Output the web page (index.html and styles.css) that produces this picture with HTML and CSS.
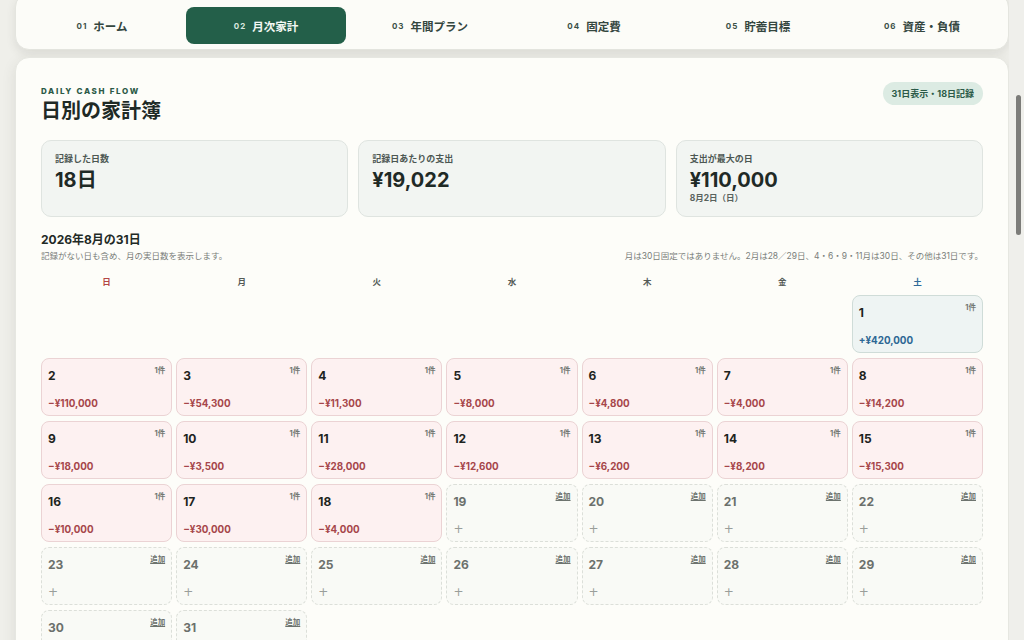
FILE: index.html
```html
<!DOCTYPE html>
<html lang="ja">
<head>
<meta charset="utf-8">
<title>日別の家計簿</title>
<link rel="stylesheet" href="styles.css">
</head>
<body>
<div class="page">
  <nav class="nav">
    <a class="tab"><span class="num">01</span>ホーム</a>
    <a class="tab active"><span class="num">02</span>月次家計</a>
    <a class="tab"><span class="num">03</span>年間プラン</a>
    <a class="tab"><span class="num">04</span>固定費</a>
    <a class="tab"><span class="num">05</span>貯蓄目標</a>
    <a class="tab"><span class="num">06</span>資産・負債</a>
  </nav>

  <main class="card">
    <header class="head">
      <div>
        <div class="eyebrow">DAILY CASH FLOW</div>
        <h1 class="title">日別の家計簿</h1>
      </div>
      <span class="badge">31日表示・18日記録</span>
    </header>

    <section class="stats">
      <div class="stat">
        <div class="stat-label">記録した日数</div>
        <div class="stat-value">18日</div>
      </div>
      <div class="stat">
        <div class="stat-label">記録日あたりの支出</div>
        <div class="stat-value">¥19,022</div>
      </div>
      <div class="stat">
        <div class="stat-label">支出が最大の日</div>
        <div class="stat-value">¥110,000</div>
        <div class="stat-sub">8月2日（日）</div>
      </div>
    </section>

    <section class="month">
      <h2 class="month-title">2026年8月の31日</h2>
      <div class="month-notes">
        <span>記録がない日も含め、月の実日数を表示します。</span>
        <span>月は30日固定ではありません。2月は28／29日、4・6・9・11月は30日、その他は31日です。</span>
      </div>
    </section>

    <div class="weekdays">
      <span class="sun">日</span><span>月</span><span>火</span><span>水</span><span>木</span><span>金</span><span class="sat">土</span>
    </div>

    <div class="grid">
      <div class="blank"></div><div class="blank"></div><div class="blank"></div><div class="blank"></div><div class="blank"></div><div class="blank"></div>
      <div class="day income"><div class="row"><b>1</b><i>1件</i></div><div class="amt">+¥420,000</div></div>

      <div class="day spend"><div class="row"><b>2</b><i>1件</i></div><div class="amt">−¥110,000</div></div>
      <div class="day spend"><div class="row"><b>3</b><i>1件</i></div><div class="amt">−¥54,300</div></div>
      <div class="day spend"><div class="row"><b>4</b><i>1件</i></div><div class="amt">−¥11,300</div></div>
      <div class="day spend"><div class="row"><b>5</b><i>1件</i></div><div class="amt">−¥8,000</div></div>
      <div class="day spend"><div class="row"><b>6</b><i>1件</i></div><div class="amt">−¥4,800</div></div>
      <div class="day spend"><div class="row"><b>7</b><i>1件</i></div><div class="amt">−¥4,000</div></div>
      <div class="day spend"><div class="row"><b>8</b><i>1件</i></div><div class="amt">−¥14,200</div></div>

      <div class="day spend"><div class="row"><b>9</b><i>1件</i></div><div class="amt">−¥18,000</div></div>
      <div class="day spend"><div class="row"><b>10</b><i>1件</i></div><div class="amt">−¥3,500</div></div>
      <div class="day spend"><div class="row"><b>11</b><i>1件</i></div><div class="amt">−¥28,000</div></div>
      <div class="day spend"><div class="row"><b>12</b><i>1件</i></div><div class="amt">−¥12,600</div></div>
      <div class="day spend"><div class="row"><b>13</b><i>1件</i></div><div class="amt">−¥6,200</div></div>
      <div class="day spend"><div class="row"><b>14</b><i>1件</i></div><div class="amt">−¥8,200</div></div>
      <div class="day spend"><div class="row"><b>15</b><i>1件</i></div><div class="amt">−¥15,300</div></div>

      <div class="day spend"><div class="row"><b>16</b><i>1件</i></div><div class="amt">−¥10,000</div></div>
      <div class="day spend"><div class="row"><b>17</b><i>1件</i></div><div class="amt">−¥30,000</div></div>
      <div class="day spend"><div class="row"><b>18</b><i>1件</i></div><div class="amt">−¥4,000</div></div>
      <div class="day empty"><div class="row"><b>19</b><u>追加</u></div><div class="plus">+</div></div>
      <div class="day empty"><div class="row"><b>20</b><u>追加</u></div><div class="plus">+</div></div>
      <div class="day empty"><div class="row"><b>21</b><u>追加</u></div><div class="plus">+</div></div>
      <div class="day empty"><div class="row"><b>22</b><u>追加</u></div><div class="plus">+</div></div>

      <div class="day empty"><div class="row"><b>23</b><u>追加</u></div><div class="plus">+</div></div>
      <div class="day empty"><div class="row"><b>24</b><u>追加</u></div><div class="plus">+</div></div>
      <div class="day empty"><div class="row"><b>25</b><u>追加</u></div><div class="plus">+</div></div>
      <div class="day empty"><div class="row"><b>26</b><u>追加</u></div><div class="plus">+</div></div>
      <div class="day empty"><div class="row"><b>27</b><u>追加</u></div><div class="plus">+</div></div>
      <div class="day empty"><div class="row"><b>28</b><u>追加</u></div><div class="plus">+</div></div>
      <div class="day empty"><div class="row"><b>29</b><u>追加</u></div><div class="plus">+</div></div>

      <div class="day empty"><div class="row"><b>30</b><u>追加</u></div><div class="plus">+</div></div>
      <div class="day empty"><div class="row"><b>31</b><u>追加</u></div><div class="plus">+</div></div>
    </div>
  </main>
</div>
<div class="scrollbar"><div class="thumb"></div></div>
</body>
</html>
```

FILE: styles.css
```css
html, body {
  margin: 0;
  padding: 0;
  height: 100%;
  overflow: hidden;
}
body {
  background: #efefea;
  font-family: "Inter", "Noto Sans CJK JP", sans-serif;
  color: #1f2a26;
}
.page {
  padding: 0 15px;
}
.nav {
  margin-top: -7px;
  display: flex;
  gap: 4px;
  padding: 13px 6px 5px;
  background: #fcfcf8;
  border: 1px solid #e4e5df;
  border-radius: 14px;
  box-shadow: 0 4px 10px rgba(60, 60, 50, 0.10);
}
.tab {
  flex: 1;
  height: 37px;
  display: flex;
  align-items: center;
  justify-content: center;
  gap: 6px;
  border-radius: 8px;
  font-size: 11.5px;
  font-weight: 700;
  color: #34463f;
}
.tab .num {
  font-size: 8px;
  letter-spacing: 1px;
  color: #3b5047;
}
.tab.active {
  background: #235f49;
  color: #f4f8f4;
}
.tab.active .num {
  color: #d8e7df;
}
.card {
  margin-top: 7px;
  background: #fdfdf9;
  border: 1px solid #e6e7e1;
  border-radius: 14px;
  padding: 27px 25px 40px;
  box-shadow: 0 4px 14px rgba(60, 60, 50, 0.10);
}
.head {
  display: flex;
  justify-content: space-between;
  align-items: flex-start;
}
.eyebrow {
  font-size: 8px;
  font-weight: 800;
  letter-spacing: 1.7px;
  color: #2b5a47;
  line-height: 12px;
}
.title {
  margin: 1px 0 0;
  font-size: 20px;
  font-weight: 700;
  line-height: 26px;
  color: #1f2a26;
}
.badge {
  margin-top: -3px;
  padding: 0 9px;
  height: 23px;
  line-height: 23px;
  border-radius: 12px;
  background: #dcebe3;
  color: #2b5a47;
  font-size: 9px;
  font-weight: 700;
}
.stats {
  margin-top: 16px;
  display: grid;
  grid-template-columns: repeat(3, 1fr);
  gap: 10px;
}
.stat {
  height: 77px;
  box-sizing: border-box;
  padding: 12px 13px;
  background: #f2f5f2;
  border: 1px solid #dfe4e0;
  border-radius: 10px;
}
.stat-label {
  font-size: 9px;
  font-weight: 700;
  color: #4c5752;
  line-height: 12px;
}
.stat-value {
  margin-top: 3px;
  font-size: 20px;
  font-weight: 700;
  line-height: 24px;
  color: #1f2a26;
}
.stat-sub {
  font-size: 8.5px;
  font-weight: 700;
  color: #59625d;
  line-height: 12px;
}
.month {
  margin-top: 15px;
}
.month-title {
  margin: 0;
  font-size: 12px;
  font-weight: 700;
  line-height: 16px;
}
.month-notes {
  margin-top: 2px;
  display: flex;
  justify-content: space-between;
  font-size: 8.5px;
  line-height: 12px;
  color: #7a7e7a;
}
.weekdays {
  margin-top: 14px;
  display: grid;
  grid-template-columns: repeat(7, 1fr);
  gap: 4px;
  text-align: center;
  font-size: 8.5px;
  font-weight: 700;
  line-height: 12px;
  color: #555b57;
}
.weekdays .sun { color: #b44545; }
.weekdays .sat { color: #2f6a9a; }
.grid {
  margin-top: 7px;
  display: grid;
  grid-template-columns: repeat(7, 1fr);
  grid-auto-rows: 58px;
  gap: 5px 4px;
}
.day {
  box-sizing: border-box;
  border-radius: 8px;
  padding: 6px 6px 0 6px;
  display: flex;
  flex-direction: column;
}
.row {
  display: flex;
  justify-content: space-between;
  align-items: flex-start;
  height: 22px;
}
.row b {
  font-size: 12px;
  font-weight: 700;
  line-height: 21px;
  color: #1d2420;
}
.row i, .row u {
  font-style: normal;
  font-size: 7.5px;
  font-weight: 700;
  color: #727873;
  line-height: 12px;
}
.amt {
  margin-top: 10px;
  font-size: 9.8px;
  font-weight: 700;
  line-height: 14px;
  color: #a6464a;
}
.spend {
  background: #fdf1f1;
  border: 1px solid #ebd3d4;
}
.income {
  background: #eef4f3;
  border: 1px solid #cfdcd8;
}
.income .amt {
  color: #2d6794;
}
.empty {
  background: #f9faf6;
  border: 1px dashed #dcdfd9;
}
.empty .row b {
  color: #6b706c;
}
.empty .row u {
  color: #6d736e;
}
.plus {
  margin-top: 8px;
  font-family: "DejaVu Sans", sans-serif;
  font-size: 12px;
  line-height: 16px;
  color: #9a9e9a;
  font-weight: 400;
}
.scrollbar {
  position: fixed;
  top: 0;
  right: 0;
  width: 15px;
  height: 100%;
  background: #efefeb;
}
.thumb {
  margin: 95px 0 0 7px;
  width: 5px;
  height: 140px;
  border-radius: 3px;
  background: #7c7c79;
}
```
